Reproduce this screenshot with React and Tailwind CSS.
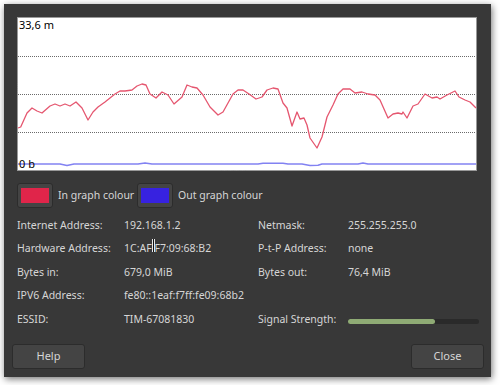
import React from "react";

const red = [
  [18, 128], [20.7, 127], [27, 113], [32, 108], [37, 111], [42, 113], [50, 106], [55, 104], [60, 106], [65, 104],
  [70, 106], [76, 102], [82, 108], [88, 120], [93, 112], [98, 107], [105, 102], [110, 98], [115, 94],
  [120, 91], [125, 91], [132, 90], [137, 86], [142, 84], [146, 85], [150, 94], [156, 98], [162, 92],
  [168, 95], [174, 104], [182, 97], [187, 85], [192, 87], [197, 88], [203, 95], [210, 107], [218, 115],
  [223, 112], [228, 103], [233, 94], [238, 90], [243, 90], [249, 94], [256, 99], [262, 97], [267, 90],
  [273, 88], [278, 89], [283, 103], [287, 108], [292, 126], [297, 112], [300, 119], [304, 118],
  [307, 125], [310, 138], [317, 148], [322, 137], [327, 117], [333, 105], [338, 94], [343, 89],
  [350, 89], [355, 93], [362, 92], [368, 94], [375, 95], [380, 100], [388, 118], [393, 114],
  [398, 113], [402, 114], [403, 112], [407, 118], [413, 106], [418, 104], [425, 94], [432, 98],
  [437, 97], [440, 99], [447, 95], [455, 91], [459, 97], [465, 100], [470, 102], [476, 108],
];

const blue = [
  [18, 164], [60, 164], [67, 165.5], [74, 164], [138, 164], [145, 163], [152, 164], [258, 164],
  [263, 163.3], [283, 163.3], [288, 164], [302, 164], [310, 165.5], [318, 165.3], [322, 164],
  [358, 164], [363, 163], [368, 164], [476, 164],
];

const toPath = (pts) => pts.map((p, i) => (i ? "L" : "M") + p[0] + " " + p[1]).join(" ");

function Graph() {
  return (
    <div className="relative w-[460px] h-[154px] bg-white">
      <svg width="460" height="154" viewBox="17 17 460 154" className="absolute inset-0">
        <rect x="17.5" y="17.5" width="459" height="153" fill="none" stroke="#333" strokeWidth="1" strokeDasharray="1 1" />
        {[56.5, 94.5, 132.5].map((y) => (
          <line key={y} x1="18" x2="476" y1={y} y2={y} stroke="#6a6a6a" strokeWidth="1" strokeDasharray="1 1" />
        ))}
        <path d={toPath(blue)} fill="none" stroke="#8282f2" strokeWidth="1.6" strokeLinejoin="round" />
        <path d={toPath(red)} fill="none" stroke="#e5566f" strokeWidth="1.3" strokeLinejoin="round" />
      </svg>
      <div className="absolute left-[2px] top-[1px] text-[11px] leading-[14px] text-black font-['Noto_Sans',sans-serif]">33,6 m</div>
      <div className="absolute left-[2px] top-[140px] text-[11px] leading-[14px] text-black font-['Noto_Sans',sans-serif]">0 b</div>
    </div>
  );
}

function Swatch({ color }) {
  return (
    <div className="w-[36px] h-[25px] rounded-[3px] bg-[#444444] border border-[#2c2c2c] flex items-center justify-center">
      <div className={"w-[28px] h-[15px] " + color} />
    </div>
  );
}

const rows = [
  ["Internet Address:", "192.168.1.2", "Netmask:", "255.255.255.0"],
  ["Hardware Address:", "HW", "P-t-P Address:", "none"],
  ["Bytes in:", "679,0 MiB", "Bytes out:", "76,4 MiB"],
  ["IPV6 Address:", "fe80::1eaf:f7ff:fe09:68b2", "", ""],
  ["ESSID:", "TIM-67081830", "Signal Strength:", "BAR"],
];

export default function App() {
  return (
    <div className="w-[500px] h-[385px] bg-white pt-[4px] pl-[4px] font-['Noto_Sans',sans-serif]">
      <div className="w-[487px] h-[373px] bg-[#383838] shadow-[1px_2px_7px_rgba(0,0,0,0.55)] flex flex-col px-[13px] pt-[13px] text-[10.5px] text-[#d6d6d6]">
        <Graph />
        <div className="flex items-center mt-[12px] h-[25px]">
          <div className="flex items-center w-[120px] gap-[5px]">
            <Swatch color="bg-[#e0254a]" />
            <span>In graph colour</span>
          </div>
          <div className="flex items-center gap-[5px]">
            <Swatch color="bg-[#3722e0]" />
            <span>Out graph colour</span>
          </div>
        </div>
        <div className="mt-[6px] grid grid-cols-[107px_134px_90px_1fr]">
          {rows.map((r, i) => (
            <React.Fragment key={i}>
              <div className="h-[23.5px] flex items-center">{r[0]}</div>
              <div className="h-[23.5px] flex items-center">
                {r[1] === "HW" ? (
                  <span className="relative">
                    1C:AF:F7:09:68:B2
                    <span className="absolute left-[28px] top-[-2px] w-[3px] h-[13px] bg-[#e8e8e8] flex justify-center">
                      <span className="w-[1px] h-[13px] bg-[#111]" />
                    </span>
                  </span>
                ) : (
                  r[1]
                )}
              </div>
              <div className="h-[23.5px] flex items-center">{r[2]}</div>
              <div className="h-[23.5px] flex items-center">
                {r[3] === "BAR" ? (
                  <div className="w-[131px] h-[5px] rounded-full bg-[#2a2a2a] mt-[3px]">
                    <div className="w-[87px] h-[5px] rounded-full bg-[#8fab75]" />
                  </div>
                ) : (
                  r[3]
                )}
              </div>
            </React.Fragment>
          ))}
        </div>
        <div className="flex justify-between mt-auto mb-[8px] -mx-[5px]">
          <button className="w-[73px] h-[25px] rounded-[3px] bg-[#444444] border border-[#2c2c2c] text-[#d6d6d6] text-[11px]">Help</button>
          <button className="w-[73px] h-[25px] rounded-[3px] bg-[#444444] border border-[#2c2c2c] text-[#d6d6d6] text-[11px] mr-[-1px]">Close</button>
        </div>
      </div>
    </div>
  );
}
